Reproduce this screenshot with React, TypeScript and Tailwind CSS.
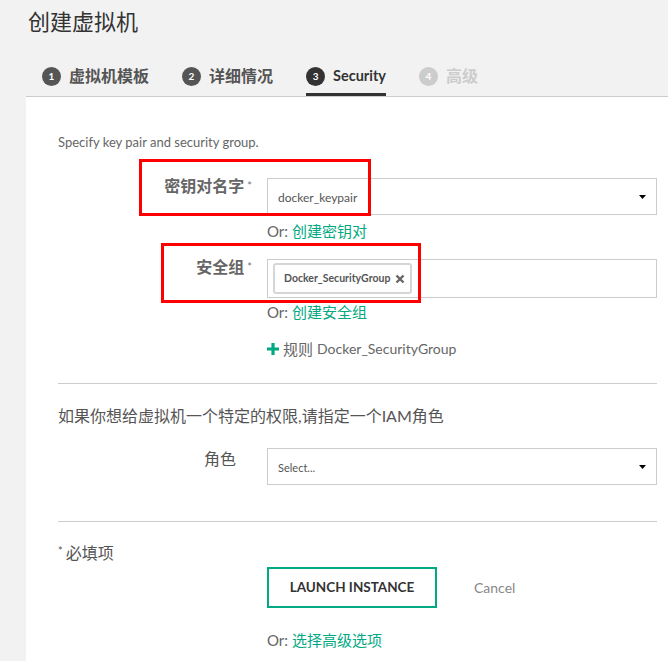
import React from 'react';

const font = { fontFamily: 'Lato, "Noto Sans CJK SC", sans-serif' };

const Caret = () => (
  <svg width="7" height="4" viewBox="0 0 7 4" className="absolute right-[10px] top-1/2 -translate-y-1/2">
    <path d="M0 0 H7 L3.5 4 Z" fill="#000" />
  </svg>
);

const Tab = ({ n, label, state }: { n: number; label: string; state: 'done' | 'active' | 'off' }) => {
  const circle = state === 'active' ? 'bg-[#333]' : state === 'done' ? 'bg-[#555]' : 'bg-[#ccc]';
  const text = state === 'active' ? 'text-[#333] text-[14.5px]' : state === 'done' ? 'text-[#555] text-[16px]' : 'text-[#ccc] text-[16px]';
  return (
    <div
      className={`flex h-[40px] items-center gap-[8px] ${state === 'active' ? 'border-b-[3px] border-[#333] pt-[3px]' : ''}`}
    >
      <span className={`flex h-[19px] w-[19px] items-center justify-center rounded-full text-[10px] font-bold text-white ${circle}`}>
        {n}
      </span>
      <span className={`font-bold ${text}`}>{label}</span>
    </div>
  );
};

const Label = ({ text, required }: { text: string; required?: boolean }) => (
  <div
    className={`flex justify-end text-[16px] leading-[16px] ${required ? 'font-bold text-[#666]' : 'font-normal text-[#555]'}`}
  >
    <span>{text}</span>
    {required ? (
      <span className="ml-[3px] pt-[2px] text-[11px] font-normal leading-[12px] text-[#777]">*</span>
    ) : (
      <span className="w-[16px]" />
    )}
  </div>
);

const OrLink = ({ link }: { link: string }) => (
  <div className="text-[15px] leading-[20px]">
    <span className="text-[#666]">Or: </span>
    <span className="text-[#01a982]">{link}</span>
  </div>
);

export default function App() {
  return (
    <div className="relative h-[661px] w-[668px] overflow-hidden bg-[#f2f2f2]" style={font}>
      <h1 className="pl-[28px] pt-[8px] text-[22px] font-normal leading-[28px] text-[#333]">创建虚拟机</h1>

      <div className="ml-[26px] mt-[20px] flex gap-[33px] border-b border-[#ccc] pl-[16px]">
        <Tab n={1} label="虚拟机模板" state="done" />
        <Tab n={2} label="详细情况" state="done" />
        <Tab n={3} label="Security" state="active" />
        <Tab n={4} label="高级" state="off" />
      </div>

      <div className="ml-[26px] bg-white pb-[40px] pl-[32px] pr-[11px] pt-[36px]">
        <p className="text-[13px] leading-[18px] text-[#666]">Specify key pair and security group.</p>

        <div className="mt-[27px] grid grid-cols-[194px_390px] gap-x-[15px]">
          <Label text="密钥对名字" required />
          <div>
            <div className="relative flex h-[37px] items-center border border-[#ccc] pl-[10px] pt-[3px] text-[12px] text-[#555]">
              docker_keypair
              <Caret />
            </div>
            <div className="mt-[6px]">
              <OrLink link="创建密钥对" />
            </div>
          </div>
        </div>

        <div className="mt-[18px] grid grid-cols-[194px_390px] gap-x-[15px]">
          <Label text="安全组" required />
          <div>
            <div className="flex h-[39px] items-start border border-[#ccc] pl-[5px] pt-[3px]">
              <span className="flex h-[31px] items-center gap-[5px] rounded-[3px] border-2 border-[#d6d6d6] pl-[9px] pr-[5px] text-[10.5px] font-bold text-[#555]">
                Docker_SecurityGroup
                <svg width="10" height="10" viewBox="0 0 10 10">
                  <path d="M1.5 1.5 L8.5 8.5 M8.5 1.5 L1.5 8.5" stroke="#666" strokeWidth="2.4" />
                </svg>
              </span>
            </div>
            <div className="mt-[4px]">
              <OrLink link="创建安全组" />
            </div>
            <div className="mt-[17px] flex items-center text-[15px] leading-[20px] text-[#666]">
              <svg width="12" height="12" viewBox="0 0 12 12" className="mr-[4px]">
                <path d="M6 0 V12 M0 6 H12" stroke="#01a982" strokeWidth="3.2" />
              </svg>
              <span>规则</span>
              <span className="ml-[4px] text-[14px]">Docker_SecurityGroup</span>
            </div>
          </div>
        </div>

        <div className="mt-[24px] border-t border-[#ccc]" />

        <p className="mt-[22px] text-[16px] leading-[20px] text-[#555]">如果你想给虚拟机一个特定的权限,请指定一个IAM角色</p>

        <div className="mt-[22px] grid grid-cols-[194px_390px] gap-x-[15px]">
          <div className="pt-[3px]">
            <Label text="角色" />
          </div>
          <div className="relative flex h-[37px] items-center border border-[#ccc] pl-[10px] pt-[3px] text-[11px] text-[#555]">
            Select...
            <Caret />
          </div>
        </div>

        <div className="mt-[36px] border-t border-[#ccc]" />

        <div className="mt-[21px] flex items-start text-[16px] leading-[20px] text-[#555]">
          <span className="mr-[3px] pt-[2px] text-[11px] leading-[12px]">*</span>
          <span>必填项</span>
        </div>

        <div className="ml-[209px] mt-[4px] flex items-center">
          <button className="h-[41px] w-[170px] border-2 border-[#01a982] text-[13.5px] font-bold text-[#333]">
            LAUNCH INSTANCE
          </button>
          <span className="ml-[37px] text-[14px] text-[#888]">Cancel</span>
        </div>

        <div className="ml-[209px] mt-[22px]">
          <OrLink link="选择高级选项" />
        </div>
      </div>

      <div className="pointer-events-none absolute left-[139px] top-[159px] h-[57px] w-[232px] border-[3px] border-[#ff0000]" />
      <div className="pointer-events-none absolute left-[161px] top-[243px] h-[60px] w-[260px] border-[3px] border-[#ff0000]" />
    </div>
  );
}
